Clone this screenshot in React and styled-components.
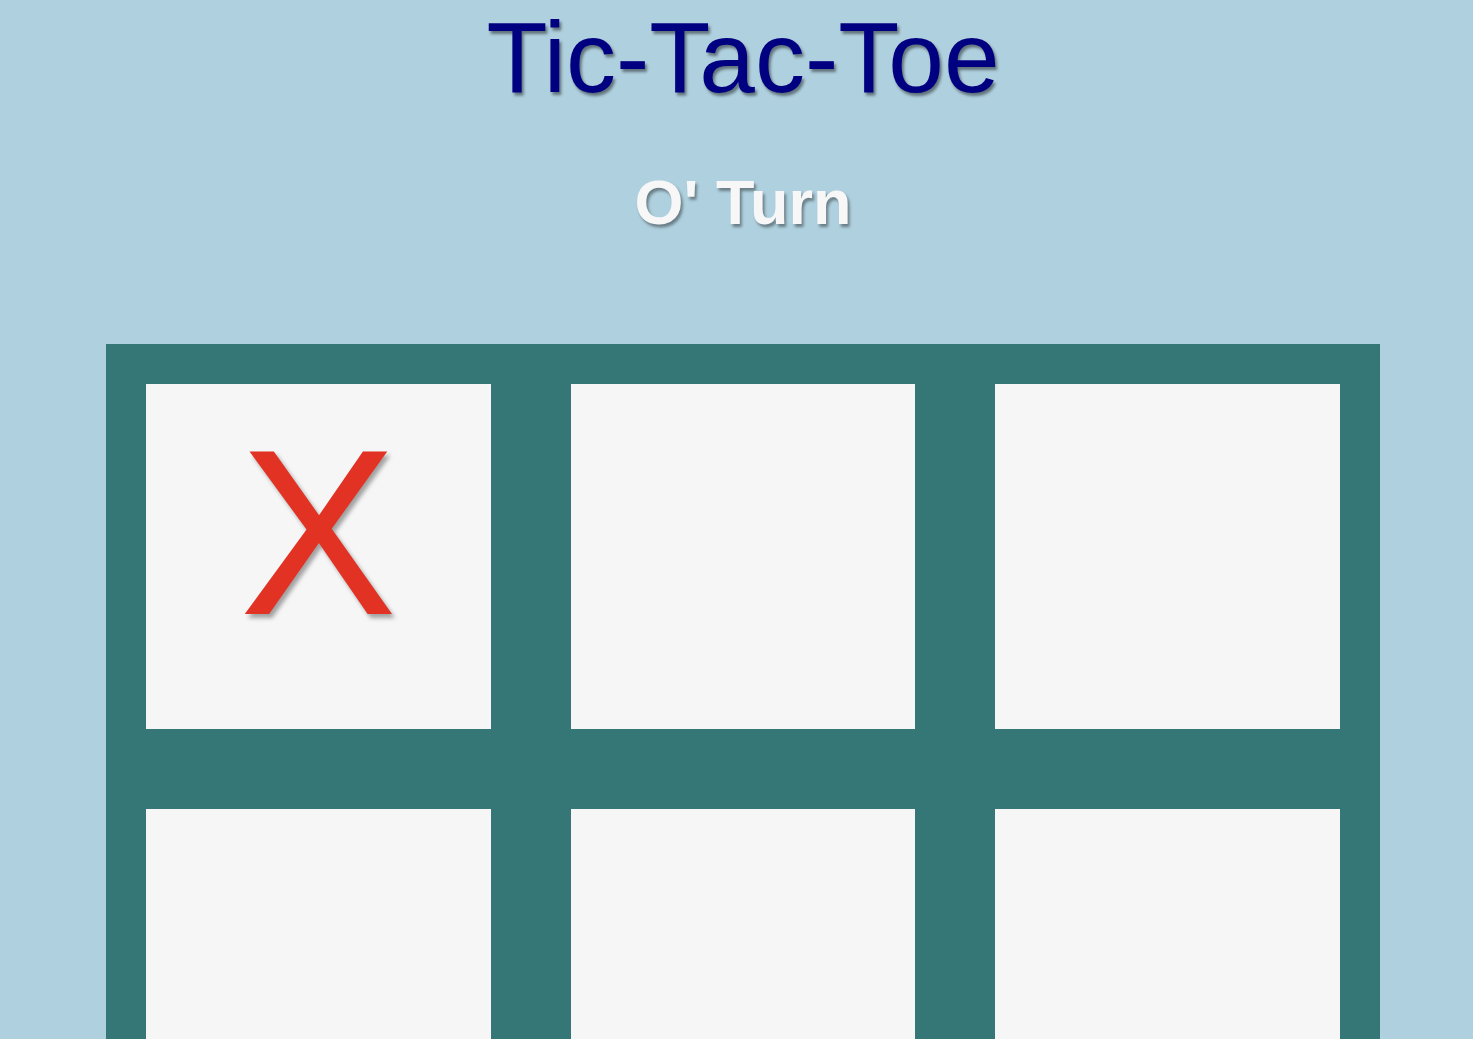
import React from 'react';
import styled, { createGlobalStyle } from 'styled-components';

const GlobalStyle = createGlobalStyle`
    html, body {
        margin: 0;
        padding: 0;
        background: #afd0de;
        font-family: "Liberation Sans", Arial, sans-serif;
    }
`;

const Page = styled.div`
    display: flex;
    flex-direction: column;
    align-items: center;
    padding-left: 13px;
    min-height: 100vh;
`;

const Title = styled.h1`
    margin: 0;
    font-size: 100px;
    font-weight: normal;
    line-height: 1.15;
    color: #000080;
    text-shadow: 2px 3px 3px rgba(0, 0, 0, 0.45);
`;

const Status = styled.h2`
    margin: 51px 0 0;
    font-size: 63px;
    font-weight: bold;
    line-height: 1.15;
    color: #f7f7f7;
    text-shadow: 2px 3px 3px rgba(0, 0, 0, 0.4);
`;

const Board = styled.div`
    box-sizing: border-box;
    margin-top: 106px;
    width: 1274px;
    padding: 40px;
    background: #357777;
    display: grid;
    grid-template-columns: repeat(3, 1fr);
    grid-auto-rows: 345px;
    gap: 80px;
`;

const Cell = styled.div`
    background: #f6f6f6;
    display: flex;
    align-items: center;
    justify-content: center;
`;

const Mark = styled.span`
    font-size: 236px;
    line-height: 1;
    margin-bottom: 50px;
    color: ${(p) => (p.$player === 'X' ? '#e23223' : '#1f4fa0')};
    text-shadow: 3px 4px 4px rgba(0, 0, 0, 0.35);
`;

const squares = ['X', null, null, null, null, null, null, null, null];

const App = () => {
    return (
        <Page>
            <GlobalStyle />
            <Title>Tic-Tac-Toe</Title>
            <Status>O' Turn</Status>
            <Board>
                {squares.map((value, i) => (
                    <Cell key={i}>
                        {value && <Mark $player={value}>{value}</Mark>}
                    </Cell>
                ))}
            </Board>
        </Page>
    );
};

export default App;
